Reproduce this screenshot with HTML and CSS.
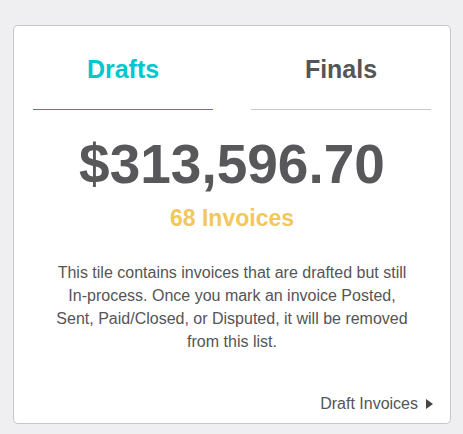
FILE: index.html
```html
<!DOCTYPE html>
<html lang="en">
<head>
<meta charset="utf-8">
<title>Invoices tile</title>
<link rel="stylesheet" href="styles.css">
</head>
<body>
  <div class="tile">
    <div class="tabs">
      <div class="tab tab-active">Drafts</div>
      <div class="tab">Finals</div>
    </div>
    <div class="amount">$313,596.70</div>
    <div class="count">68 Invoices</div>
    <p class="desc">This tile contains invoices that are drafted but still In-process. Once you mark an invoice Posted, Sent, Paid/Closed, or Disputed, it will be removed from this list.</p>
    <div class="footer">
      <a class="link" href="#">Draft Invoices<span class="caret"></span></a>
    </div>
  </div>
</body>
</html>
```

FILE: styles.css
```css
html, body {
  margin: 0;
  background: #efeff1;
}
body {
  padding: 25px 12px 0 13px;
  font-family: "Liberation Sans", Arial, sans-serif;
  color: #555;
}
.tile {
  box-sizing: border-box;
  height: 399px;
  background: #fff;
  border: 1px solid #c6c6c6;
  border-radius: 5px;
  padding: 0 19px;
  display: flex;
  flex-direction: column;
  text-align: center;
}
.tabs {
  display: grid;
  grid-template-columns: 180px 180px;
  justify-content: space-between;
}
.tab {
  padding: 28px 0 25px;
  font-size: 25px;
  line-height: 30px;
  font-weight: bold;
  color: #555;
  border-bottom: 1px solid #c8c8c8;
}
.tab-active {
  color: #00c7cf;
  border-bottom-color: #2594bd;
}
.amount {
  margin-top: 27px;
  font-size: 55px;
  line-height: 55px;
  font-weight: bold;
  color: #58585a;
}
.count {
  margin-top: 13px;
  font-size: 23px;
  line-height: 26px;
  font-weight: bold;
  color: #f2c75c;
}
.desc {
  margin: 30px 0 0;
  padding: 0 18px;
  font-size: 16px;
  line-height: 23px;
  color: #555;
}
.footer {
  margin-top: auto;
  margin-right: -2px;
  padding-bottom: 8px;
  text-align: right;
}
.link {
  display: inline-flex;
  align-items: center;
  gap: 8px;
  font-size: 16px;
  line-height: 23px;
  color: #555;
  text-decoration: none;
}
.caret {
  width: 0;
  height: 0;
  border-left: 7px solid #444;
  border-top: 5.5px solid transparent;
  border-bottom: 5.5px solid transparent;
  margin-top: 1px;
}
```
